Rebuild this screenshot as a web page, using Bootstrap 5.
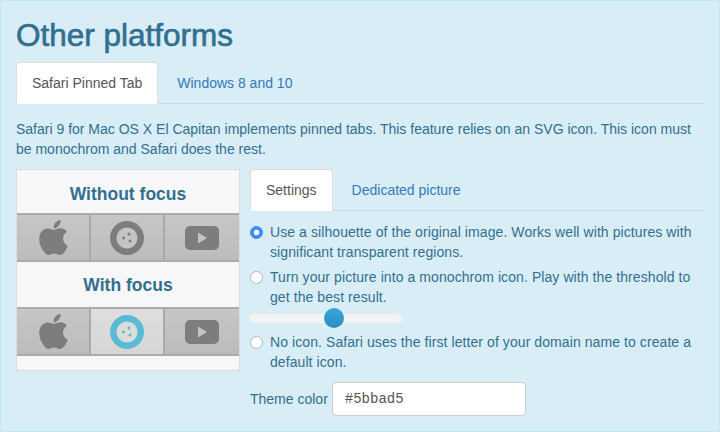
<!DOCTYPE html>
<html lang="en">
<head>
<meta charset="utf-8">
<title>Other platforms</title>
<link href="https://cdn.jsdelivr.net/npm/bootstrap@5.3.0/dist/css/bootstrap.min.css" rel="stylesheet">
<style>
html, body { margin: 0; height: 432px; overflow: hidden; background: #d9edf7; }
body { font-family: "Liberation Sans", Arial, sans-serif; font-size: 14px; line-height: 20px; color: #31708f; }
.plat-panel { height: 432px; background: #d9edf7; border: 1px solid #bce8f1; border-radius: 4px; padding: 15px; overflow: hidden; }
.plat-title { font-family: inherit; font-size: 31.5px; line-height: 33px; font-weight: 400; -webkit-text-stroke: .65px #31708f; color: #31708f; margin: 3px 0 10px; }
.plat-tabs { --bs-nav-tabs-border-color: #ccd6dc; --bs-nav-tabs-border-width: 1px; --bs-nav-tabs-border-radius: 4px; margin-bottom: 15px; }
.plat-tabs .nav-link { font-size: 14px; line-height: 20px; padding: 10px 15px 10px; margin-right: 3px; color: #337ab7; }
.plat-tabs .nav-link.active { color: #555; background: #fff; border-color: #ddd #ddd transparent; }
.plat-tabs .nav-link:not(.active) { border-color: transparent; }
.plat-intro { margin: 0 0 10px; width: 680px; }
.plat-cols { display: flex; gap: 10px; }
.plat-left { width: 224px; height: 202px; flex: none; background: #f7f7f9; border: 1px solid #dcdcdc; }
.plat-right { flex: 1 1 auto; min-width: 0; }
.plat-head { font-size: 17.5px; line-height: 20px; font-weight: 700; color: #31708f; text-align: center; margin: 0; }
.head-a { padding: 14px 0 9px; }
.head-b { padding: 13px 0 12px; }
.strip { display: flex; height: 49px; background: linear-gradient(#c6c6c6, #bcbcbc); border-top: 2px solid #ababab; border-bottom: 2px solid #ababab; }
.strip-cell { display: flex; align-items: center; justify-content: center; }
.cell-1 { width: 72px; }
.cell-2 { width: 76px; border-left: 2px solid #a9a9a9; border-right: 2px solid #a9a9a9; }
.cell-3 { flex: 1 1 auto; }
.cell-on { background: linear-gradient(#dedede, #d6d6d6); }
.plat-right .plat-tabs { margin-bottom: 11px; }
.plat-check { min-height: 0; padding-left: 20px; margin-bottom: 5px; letter-spacing: .08px; }
.plat-check .form-check-input { width: 13px; height: 13px; margin-left: -20px; margin-top: 3.5px; background-color: #fff; border: 1px solid #b5b5b5; }
.plat-check .form-check-input:checked { background-color: #3b8ef5; border-color: #3b8ef5; }
.plat-range { display: block; -webkit-appearance: none; appearance: none; width: 152px; height: 20px; margin: -4px 0 4px; padding: 0; background: transparent; }
.plat-range::-webkit-slider-runnable-track { height: 9px; background: #f2f3f3; border-radius: 5px; }
.plat-range::-webkit-slider-thumb { -webkit-appearance: none; appearance: none; width: 20px; height: 20px; margin-top: -5.5px; border: 0; border-radius: 50%; background: linear-gradient(#3aa6dd, #2a8cc4); }
.plat-color { display: flex; align-items: center; gap: 4px; margin-top: 10px; }
.plat-color label { margin: 0; }
.plat-input { width: 194px; height: 34px; padding: 6px 12px; font-family: "Liberation Mono", "DejaVu Sans Mono", monospace; font-size: 14px; line-height: 20px; color: #555; border: 1px solid #ccc; border-radius: 4px; box-shadow: none; }
</style>
</head>
<body>
<div class="plat-panel">
  <h2 class="plat-title">Other platforms</h2>
  <ul class="nav nav-tabs plat-tabs">
    <li class="nav-item"><a class="nav-link active" href="#">Safari Pinned Tab</a></li>
    <li class="nav-item"><a class="nav-link" href="#">Windows 8 and 10</a></li>
  </ul>
  <p class="plat-intro">Safari 9 for Mac OS X El Capitan implements pinned tabs. This feature relies on an SVG icon. This icon must be monochrom and Safari does the rest.</p>
  <div class="plat-cols">
    <div class="plat-left">
      <h4 class="plat-head head-a">Without focus</h4>
      <div class="strip">
        <div class="strip-cell cell-1"><svg width="29" height="35" viewBox="4.3 3 15.4 18" preserveAspectRatio="none"><path fill="#7d7d7d" d="M17.05 20.28c-.98.95-2.05.8-3.08.35-1.09-.46-2.09-.48-3.24 0-1.44.62-2.2.44-3.06-.35C2.79 15.25 3.51 7.59 9.05 7.31c1.35.07 2.29.74 3.08.8 1.18-.24 2.31-.93 3.57-.84 1.51.12 2.65.72 3.4 1.8-3.12 1.87-2.38 5.98.48 7.13-.57 1.5-1.31 2.99-2.54 4.09zM12.03 7.25c-.15-2.23 1.66-4.07 3.74-4.25.29 2.58-2.34 4.5-3.74 4.25z"/></svg></div>
        <div class="strip-cell cell-2"><svg width="34" height="34" viewBox="0 0 34 34"><circle cx="17" cy="17" r="17" fill="#7d7d7d"/><circle cx="17" cy="17" r="10.5" fill="#c4c4c4"/><circle cx="13.5" cy="17" r="1.5" fill="#7d7d7d"/><circle cx="19" cy="13" r="1.5" fill="#7d7d7d"/><circle cx="20" cy="20" r="1.5" fill="#7d7d7d"/></svg></div>
        <div class="strip-cell cell-3"><svg width="34" height="24" viewBox="0 0 34 24"><rect width="34" height="24" rx="5" fill="#7d7d7d"/><path d="M13 6.5l9 5.5-9 5.5z" fill="#c4c4c4"/></svg></div>
      </div>
      <h4 class="plat-head head-b">With focus</h4>
      <div class="strip">
        <div class="strip-cell cell-1"><svg width="29" height="35" viewBox="4.3 3 15.4 18" preserveAspectRatio="none"><path fill="#7d7d7d" d="M17.05 20.28c-.98.95-2.05.8-3.08.35-1.09-.46-2.09-.48-3.24 0-1.44.62-2.2.44-3.06-.35C2.79 15.25 3.51 7.59 9.05 7.31c1.35.07 2.29.74 3.08.8 1.18-.24 2.31-.93 3.57-.84 1.51.12 2.65.72 3.4 1.8-3.12 1.87-2.38 5.98.48 7.13-.57 1.5-1.31 2.99-2.54 4.09zM12.03 7.25c-.15-2.23 1.66-4.07 3.74-4.25.29 2.58-2.34 4.5-3.74 4.25z"/></svg></div>
        <div class="strip-cell cell-2 cell-on"><svg width="34" height="34" viewBox="0 0 34 34"><circle cx="17" cy="17" r="17" fill="#5bbad5"/><circle cx="17" cy="17" r="10.5" fill="#dcdcdc"/><circle cx="13.5" cy="17" r="1.5" fill="#5bbad5"/><circle cx="19" cy="13" r="1.5" fill="#5bbad5"/><circle cx="20" cy="20" r="1.5" fill="#5bbad5"/></svg></div>
        <div class="strip-cell cell-3"><svg width="34" height="24" viewBox="0 0 34 24"><rect width="34" height="24" rx="5" fill="#7d7d7d"/><path d="M13 6.5l9 5.5-9 5.5z" fill="#c4c4c4"/></svg></div>
      </div>
    </div>
    <div class="plat-right">
      <ul class="nav nav-tabs plat-tabs">
        <li class="nav-item"><a class="nav-link active" href="#">Settings</a></li>
        <li class="nav-item"><a class="nav-link" href="#">Dedicated picture</a></li>
      </ul>
      <div class="form-check plat-check">
        <input class="form-check-input" type="radio" name="mode" id="m1" checked>
        <label class="form-check-label" for="m1">Use a silhouette of the original image. Works well with pictures with significant transparent regions.</label>
      </div>
      <div class="form-check plat-check">
        <input class="form-check-input" type="radio" name="mode" id="m2">
        <label class="form-check-label" for="m2">Turn your picture into a monochrom icon. Play with the threshold to get the best result.</label>
      </div>
      <input class="plat-range" type="range" min="0" max="100" value="56" aria-label="Threshold">
      <div class="form-check plat-check">
        <input class="form-check-input" type="radio" name="mode" id="m3">
        <label class="form-check-label" for="m3">No icon. Safari uses the first letter of your domain name to create a default icon.</label>
      </div>
      <div class="plat-color">
        <label for="tc">Theme color</label>
        <input class="form-control plat-input" id="tc" type="text" value="#5bbad5">
      </div>
    </div>
  </div>
</div>
<script src="https://cdn.jsdelivr.net/npm/bootstrap@5.3.0/dist/js/bootstrap.bundle.min.js"></script>
</body>
</html>
